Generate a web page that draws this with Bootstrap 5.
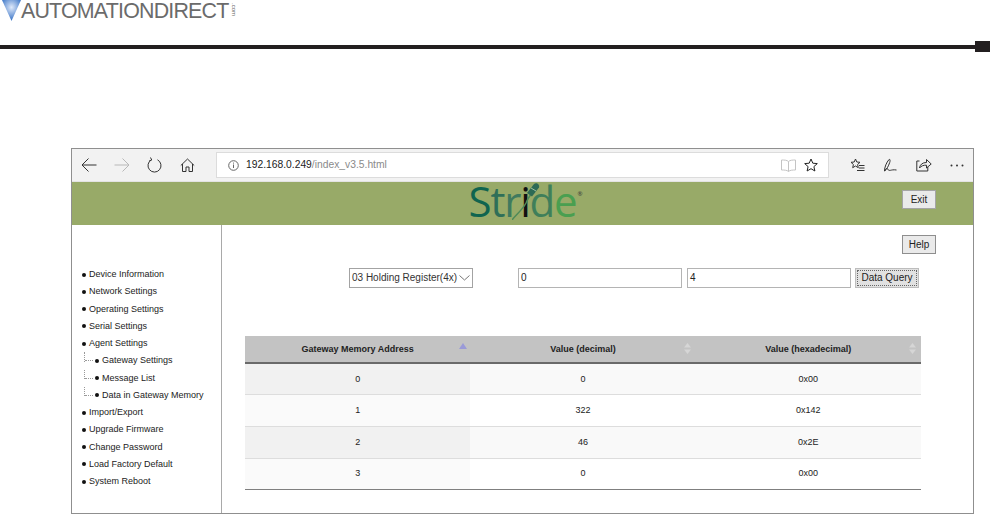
<!DOCTYPE html>
<html lang="en">
<head>
<meta charset="utf-8">
<title>Stride</title>
<link rel="stylesheet" href="https://cdn.jsdelivr.net/npm/bootstrap@5.3.0/dist/css/bootstrap.min.css">
<style>
html,body{height:514px;overflow:hidden;background:#fff}
body{font-family:"Liberation Sans",Arial,sans-serif;color:#222;font-size:9px;line-height:1}
.brand-row{height:41px;padding-left:2px;align-items:flex-start}
.brand-name{font-size:21.4px;color:#6b6b6b;line-height:22px;letter-spacing:-.8px}
.brand-com{font-size:6px;color:#666;writing-mode:vertical-rl;line-height:6px;margin:3px 0 0 3px}
.rule-row{height:11px;margin-bottom:96px}
.rule-line{height:4px;background:#231f20;flex:1}
.rule-end{width:15px;height:11px;background:#231f20}
.browser-win{margin-left:71px;width:903px;height:366px;border:1px solid #8f8f8f}
.tool-bar{height:33px;background:#f2f2f2;border-bottom:1px solid #e3e3e3}
.tool-ico{width:33px;display:flex;justify-content:center;flex:none}
.addr-bar{width:613px;height:26px;margin-left:12px;background:#fff;border:1px solid #dcdcdc;padding:0 10px 0 11px;font-size:10.3px;color:#222}
.addr-path{color:#8a8a8a}
.addr-info{margin-right:7px}
.tool-right{margin-left:12px}
.green-bar{height:43px;background:#98aa68;position:relative}
.stride-mark{font-family:"Open Sans",sans-serif;font-size:42px;line-height:37px;height:43px;letter-spacing:-1.2px;position:relative}
.stylus{position:absolute;left:43px;top:0}
.reg-mark{font-size:6px;line-height:6px;position:absolute;right:-6px;top:9px;color:#333;letter-spacing:0}
.page-btn{font-family:"Liberation Sans",sans-serif;font-size:10px;line-height:1;color:#222;background:#eaeaea;border:1px solid #8e8e8e;border-radius:0;padding:0}
.exit-btn{position:absolute;left:830px;top:8px;width:34px;height:19px;border-color:#a5a5a5}
.body-row{height:288px}
.side-col{width:150px;border-right:1px solid #a9a9a9;padding:41px 0 0 10px;flex:none}
.side-item{height:17.25px;display:flex;align-items:center;gap:3px;white-space:nowrap;color:#222}
.side-dot{width:4px;height:4px;border-radius:50%;background:#111;flex:none}
.side-sub{padding-left:13px;position:relative}
.side-sub::before{content:"";position:absolute;left:2px;top:0;bottom:8px;border-left:1px dotted #999}
.side-sub::after{content:"";position:absolute;left:3px;width:8px;top:8px;border-top:1px dotted #999}
.main-col{flex:1;padding:10px 0 0 23px;position:relative}
.help-row{justify-content:flex-end;padding-right:37px;height:19px}
.help-btn{width:34px;height:19px}
.query-row{margin-top:14px;height:20px;padding-left:104px}
.fn-select{width:124px;height:20px;font-size:10px;border:1px solid #a3a3a3;padding:0 2px;color:#333;justify-content:space-between;display:flex;align-items:center}
.num-field{height:20px;width:164px;border:1px solid #b4b4b4;font-size:10px;padding:0 2px;color:#222;background:#fff}
.first-field{margin-left:45px}
.second-field{margin-left:5px}
.query-btn{margin-left:4px;width:64px;height:20px;background:#e1e1e1;border:1px solid #bdbdbd;outline:1px dotted #666;outline-offset:-3px}
.data-tbl{margin:48px 0 0 0;width:676px;table-layout:fixed;font-size:9px;border-collapse:collapse;--bs-table-bg:transparent}
.data-tbl th{background:#c3c3c3;height:27px;border-bottom:2px solid #6a6a6a;font-weight:700;text-align:center;vertical-align:middle;padding:0;position:relative;color:#222}
.data-tbl td{height:31.7px;padding:0;text-align:center;vertical-align:middle;border-bottom:1px solid #ddd;color:#222}
.data-tbl tr.odd-row td{background:#f9f9f9}
.data-tbl tr.odd-row td.sort-cell{background:#f1f1f1}
.data-tbl tr.even-row td.sort-cell{background:#fafafa}
.data-tbl tr:last-child td{border-bottom:1px solid #7f7f7f}
.sort-ico{position:absolute;right:5px;top:7px}
.sort-first{right:3px;top:7px}
</style>
</head>
<body>
<div class="d-flex brand-row">
  <svg width="19" height="21" viewBox="0 0 19 21"><defs><radialGradient id="vg" cx=".5" cy=".35" r=".6"><stop offset="0" stop-color="#dfe9fa"/><stop offset="1" stop-color="#3f78c8"/></radialGradient></defs><path d="M0 0h19L9.500 21z" fill="url(#vg)"/></svg>
  <span class="brand-name">AUTOMATIONDIRECT</span>
  <span class="brand-com">.com</span>
</div>
<div class="d-flex align-items-center rule-row">
  <div class="rule-line"></div>
  <div class="rule-end"></div>
</div>

<div class="browser-win">
  <div class="d-flex align-items-center tool-bar">
    <span class="tool-ico"><svg width="16" height="14" viewBox="0 0 16 14" fill="none" stroke="#333"><path d="M15.500 7H1M7.500 .5 1 7l6.500 6.500"/></svg></span>
    <span class="tool-ico"><svg width="16" height="14" viewBox="0 0 16 14" fill="none" stroke="#b8b8b8"><path d="M.5 7H15M8.500 .5 15 7l-6.500 6.500"/></svg></span>
    <span class="tool-ico"><svg width="15" height="16" viewBox="0 0 15 16" fill="none" stroke="#333"><path d="M4.500 2.800A6.500 6.500 0 1 0 10.500 2.800M3.500 .5l1.200 2.500-2.600 1"/></svg></span>
    <span class="tool-ico"><svg width="15" height="14" viewBox="0 0 15 14" fill="none" stroke="#333"><path d="M.8 7.500 7.500 1l6.700 6.500M2.500 6v7.500h3.500V9h3v4.500h3.500V6"/></svg></span>
    <div class="d-flex align-items-center addr-bar">
      <svg width="11" height="11" viewBox="0 0 11 11" fill="none" stroke="#666" class="addr-info"><circle cx="5.500" cy="5.500" r="4.800"/><path d="M5.500 4.500v3.500M5.500 2.600v1"/></svg>
      <span>192.168.0.249<span class="addr-path">/index_v3.5.html</span></span>
      <svg width="15" height="13" viewBox="0 0 15 13" fill="none" stroke="#c4c4c4" class="ms-auto"><path d="M7.500 2.500C6 1 3 1 .5 1v10c2.500 0 5.500 0 7 1.500 1.500-1.500 4.500-1.500 7-1.500V1c-2.500 0-5.500 0-7 1.500zm0 0v10"/></svg>
      <svg width="14" height="14" viewBox="0 0 14 14" fill="none" stroke="#222" class="ms-2"><path d="M7 1l1.800 4.200 4.500.4-3.400 3 1 4.400L7 10.700 3.100 13l1-4.400-3.400-3 4.500-.4z"/></svg>
    </div>
    <div class="d-flex align-items-center tool-right">
      <span class="tool-ico"><svg width="15" height="14" viewBox="0 0 15 14" fill="none" stroke="#333"><path d="M5.500 1l1.300 3 3.200.3-2.400 2.200.7 3.200-2.800-1.700-2.800 1.700.7-3.200L1 4.300 4.200 4zM9 7.500h5.500M9 10h5.500M7 12.500h7.500"/></svg></span>
      <span class="tool-ico"><svg width="15" height="15" viewBox="0 0 15 15" fill="none" stroke="#333"><path d="M6 1.500C3.500 4.500 1.500 9 1.500 13c2-1 4-5 5.200-8.500C7.400 2.500 7 .8 6 1.500zM1.500 13c1.500-3 3-3 3.500-1.500.4 1 1.500 1 2.500.8s3-.8 6-.3"/></svg></span>
      <span class="tool-ico"><svg width="16" height="14" viewBox="0 0 16 14" fill="none" stroke="#333"><path d="M3.500 3H.8v10h11V9M3.500 10c.5-3.500 3-5.500 7-5.500V1.500L15.200 6l-4.700 4V7.200C7.500 7 5 8 3.500 10z"/></svg></span>
      <span class="tool-ico"><svg width="14" height="3" viewBox="0 0 14 3" fill="#333"><circle cx="1.500" cy="1.500" r="1"/><circle cx="7" cy="1.500" r="1"/><circle cx="12.500" cy="1.500" r="1"/></svg></span>
    </div>
  </div>

  <div class="green-bar d-flex justify-content-center">
    <div class="stride-mark">
      <span style="color:#10654f">S</span><span style="color:#2f6f58">t</span><span style="color:#3f7a5e">r</span><span style="color:#111">i</span><span style="color:#3f7f5a">d</span><span style="color:#4a9f50">e</span><span class="reg-mark">®</span>
      <svg class="stylus" width="30" height="38" viewBox="0 0 30 38" fill="none"><path d="M0 38C4 33 11 27 14 21 16 16 19 12 22 8" stroke="#4f8a58" stroke-width="1.500"/><path d="M15 11l7-9c2.500-2 6 .5 5 3.500l-7 9z" fill="#2d6a55"/><path d="M19 6l5 3" stroke="#9fc0a0"/></svg>
    </div>
    <button type="button" class="page-btn exit-btn">Exit</button>
  </div>

  <div class="d-flex body-row">
    <div class="side-col">
      <div class="side-item"><i class="side-dot"></i>Device Information</div>
      <div class="side-item"><i class="side-dot"></i>Network Settings</div>
      <div class="side-item"><i class="side-dot"></i>Operating Settings</div>
      <div class="side-item"><i class="side-dot"></i>Serial Settings</div>
      <div class="side-item"><i class="side-dot"></i>Agent Settings</div>
      <div class="side-item side-sub"><i class="side-dot"></i>Gateway Settings</div>
      <div class="side-item side-sub"><i class="side-dot"></i>Message List</div>
      <div class="side-item side-sub"><i class="side-dot"></i>Data in Gateway Memory</div>
      <div class="side-item"><i class="side-dot"></i>Import/Export</div>
      <div class="side-item"><i class="side-dot"></i>Upgrade Firmware</div>
      <div class="side-item"><i class="side-dot"></i>Change Password</div>
      <div class="side-item"><i class="side-dot"></i>Load Factory Default</div>
      <div class="side-item"><i class="side-dot"></i>System Reboot</div>
    </div>
    <div class="main-col">
      <div class="d-flex help-row"><button type="button" class="page-btn help-btn">Help</button></div>
      <div class="d-flex align-items-center query-row">
        <div class="fn-select"><span>03 Holding Register(4x)</span><svg width="11" height="6" viewBox="0 0 11 6" fill="none" stroke="#777"><path d="M.5.5 5.500 5l5-4.500"/></svg></div>
        <div class="num-field first-field d-flex align-items-center">0</div>
        <div class="num-field second-field d-flex align-items-center">4</div>
        <button type="button" class="page-btn query-btn">Data Query</button>
      </div>
      <table class="table data-tbl">
        <thead>
          <tr>
            <th>Gateway Memory Address<svg class="sort-ico sort-first" width="8" height="6" viewBox="0 0 8 6" fill="#9a9ad8"><path d="M4 0l4 6H0z"/></svg></th>
            <th>Value (decimal)<svg class="sort-ico" width="7" height="11" viewBox="0 0 7 11" fill="#d6d6d6"><path d="M3.500 0 7 4.500H0zM3.500 11 0 6.500h7z"/></svg></th>
            <th>Value (hexadecimal)<svg class="sort-ico" width="7" height="11" viewBox="0 0 7 11" fill="#d6d6d6"><path d="M3.500 0 7 4.500H0zM3.500 11 0 6.500h7z"/></svg></th>
          </tr>
        </thead>
        <tbody>
          <tr class="odd-row"><td class="sort-cell">0</td><td>0</td><td>0x00</td></tr>
          <tr class="even-row"><td class="sort-cell">1</td><td>322</td><td>0x142</td></tr>
          <tr class="odd-row"><td class="sort-cell">2</td><td>46</td><td>0x2E</td></tr>
          <tr class="even-row"><td class="sort-cell">3</td><td>0</td><td>0x00</td></tr>
        </tbody>
      </table>
    </div>
  </div>
</div>
</body>
</html>
